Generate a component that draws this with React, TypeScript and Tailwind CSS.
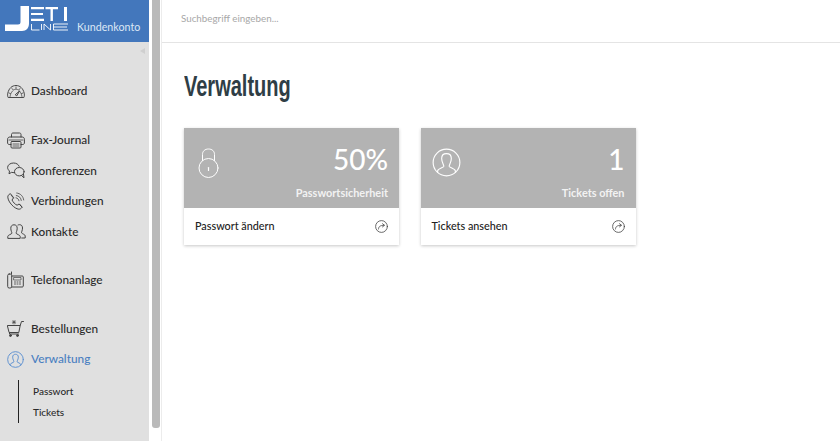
import React from "react";

const ico = { fill: "none", stroke: "currentColor", strokeWidth: 1, strokeLinecap: "round" as const, strokeLinejoin: "round" as const };

function Gauge() {
  return (
    <svg width="18" height="14" viewBox="0 0 18 14" {...ico}>
      <path d="M1 13.200c-.6-1.200-.5-2.800-.2-4C2 4.200 5 1.500 9 1.500s7 2.700 8.200 7.700c.3 1.200.4 2.800-.2 4z" />
      <path d="M3 13.200c0-3 2.500-8 6-8s6 5 6 8" strokeWidth=".7" />
      <path d="M8.500 10.500l4-3.500-2.500 4.500z" />
      <path d="M2 9l1.500.6M5 4.500l1 1.200M9 3v1.500M13 4.500l-1 1.200M16 9l-1.500.6" strokeWidth=".8" />
    </svg>
  );
}
function Printer() {
  return (
    <svg width="18" height="17" viewBox="0 0 18 17" {...ico}>
      <path d="M4.500 5V2.500C4.500 1.500 5.200 1 6 1h6.500c1 0 1.500.7 1.500 1.500V5" />
      <path d="M4 12.500H2.200C1.300 12.500.6 11.800.6 11V7.200C.6 6 1.500 5 2.800 5h12.400c1.300 0 2.200 1 2.200 2.200V11c0 .8-.7 1.500-1.600 1.500H14" />
      <rect x="4" y="9.500" width="10" height="6.500" rx="1" />
      <path d="M6 12h6M6 14h6M2 8h14" strokeWidth=".8" />
    </svg>
  );
}
function Chat() {
  return (
    <svg width="18" height="17" viewBox="0 0 18 17" {...ico}>
      <path d="M7.500 10.600c-1 .1-2 0-2.800-.3L2 11.800l.5-2.800C1.300 8 .6 6.700.6 5.600.6 3 3.200 1 6.500 1c2.700 0 5 1.300 5.700 3.300" />
      <ellipse cx="12.300" cy="9.700" rx="4.800" ry="4.200" />
      <path d="M14.500 13.500l2.500 2.300-.5-3.500" />
    </svg>
  );
}
function PhoneWaves() {
  return (
    <svg width="18" height="18" viewBox="0 0 18 18" {...ico}>
      <path d="M3 1.800c-1.300.7-2.300 1.900-2.200 3.400.4 5 6.500 11.500 11 12 1.300.1 2.600-.8 3.300-2l-3-3.200-2 1.200C8 12.500 6 10 5 8l1.400-2z" />
      <path d="M4.200 3.200l2.200 2.800M12.800 12.200l2.300 2.800" strokeWidth=".7" />
      <path d="M9 5.800c1.500.2 2.800 1.500 3 3M9.300 3.500c2.700.3 4.700 2.300 5 5M9.700 1c3.800.4 6.500 3.200 7 7" strokeWidth=".8" />
    </svg>
  );
}
function Persons() {
  return (
    <svg width="19" height="15" viewBox="0 0 19 15" {...ico}>
      <path d="M.8 14v-1.600c0-1.300 3.500-2.200 4-3C5.200 8.700 3.800 7 3.800 4.200 3.800 2.100 5 .8 7 .8s3.200 1.300 3.200 3.400c0 2.800-1.400 4.500-1 5.200.5.800 4 1.700 4 3V14z" />
      <path d="M11 1c.5-.2 1-.3 1.500-.3 2 0 3 1.300 3 3.300 0 2.500-1.300 4.300-.9 5 .4.700 3.600 1.500 3.600 2.800V14h-3.500" />
    </svg>
  );
}
function PhoneBox() {
  return (
    <svg width="17" height="18" viewBox="0 0 17 18" {...ico}>
      <path d="M4.500 1v2" />
      <rect x=".7" y="3" width="4" height="14" rx="1.500" />
      <path d="M4.700 5h10.600c.6 0 1 .4 1 1v9c0 .6-.4 1-1 1H4.700" />
      <rect x="7" y="6.500" width="7" height="2.500" strokeWidth=".7" />
      <path d="M7.500 11h1M10 11h1M12.500 11h1M7.500 13h1M10 13h1M12.500 13h1" strokeWidth=".9" />
    </svg>
  );
}
function Cart() {
  return (
    <svg width="17" height="17" viewBox="0 0 17 17" {...ico}>
      <path d="M.7 5.500h12.500l-1.400 7H2.500z" />
      <path d="M13.200 5.500L14.500 1.500H16.500" />
      <path d="M2.500 12.500v1.500h9" />
      <circle cx="3.500" cy="15.500" r="1" fill="currentColor" />
      <circle cx="10.500" cy="15.500" r="1" fill="currentColor" />
      <path d="M7 .5v3.500M5.300 2.200H8.700M5.700 1l2.600 2.400M8.300 1L5.700 3.400" strokeWidth=".7" />
    </svg>
  );
}
function UserCircle({ size, sw = 1 }: { size: number; sw?: number }) {
  return (
    <svg width={size} height={size} viewBox="0 0 18 18" {...ico} strokeWidth={sw}>
      <circle cx="9" cy="9" r="8.300" />
      <path d="M3.500 15v-.8c0-1.200 3.300-1.900 3.800-2.700.4-.7-1.300-2.300-1.300-5 0-2 1.200-3 3-3s3 1 3 3c0 2.700-1.700 4.300-1.300 5 .5.800 3.800 1.500 3.800 2.700v.8" />
    </svg>
  );
}
function Lock() {
  return (
    <svg width="21" height="30" viewBox="0 0 21 30" {...ico} strokeWidth={1}>
      <path d="M4.500 12.500V6.500C4.500 3 7 1 10.500 1s6 2 6 5.500v6" />
      <circle cx="10.500" cy="20" r="9.500" />
      <path d="M10.500 19.500v3" strokeWidth="1.200" />
    </svg>
  );
}
function Share() {
  return (
    <svg width="13" height="13" viewBox="0 0 13 13" {...ico} strokeWidth={0.8}>
      <circle cx="6.500" cy="6.500" r="5.900" />
      <path d="M3.500 9c0-2.300 1.500-3.700 5.500-3.700M7.500 3.700L9.500 5.300 7.500 6.900" />
    </svg>
  );
}
function Logo() {
  return (
    <svg width="63" height="25" viewBox="0 0 63 25" fill="white" className="shrink-0">
      <path d="M15.500 0H24v17.500c0 4.500-2.500 7.500-7 7.500H0v-6.500h13c1.700 0 2.500-.8 2.500-2.500z" />
      <path d="M26 1h13v2.200H26zM26 7h12v2H26zM26 12.800h13V15H26z" />
      <path d="M40.500 1H53v2.200H40.500zM45.500 3h2.400v12h-2.400z" />
      <path d="M57 1h3v14h-3z" transform="translate(2 0)" />
      <g fill="none" stroke="white" strokeWidth=".9">
        <path d="M26.500 18v6h8M36.500 18v6M39 24v-6l6.500 6v-6M63 18H48.500v6H63M48.500 21H62" />
      </g>
    </svg>
  );
}

function NavRow({ icon, label, active }: { icon: React.ReactNode; label: string; active?: boolean }) {
  return (
    <div className={`flex h-[30.500px] items-center pl-[7px] ${active ? "text-[#4a7fc1]" : "text-[#2b2b2b]"}`}>
      <span className={`flex w-[24px] shrink-0 items-center justify-start ${active ? "text-[#5b8fd0]" : "text-[#444]"}`}>{icon}</span>
      <span className="text-[11.800px] font-medium leading-none">{label}</span>
    </div>
  );
}

function Card({ icon, value, caption, action, iconClass }: { icon: React.ReactNode; value: string; caption: string; action: string; iconClass: string }) {
  return (
    <div className="w-[215px] bg-white shadow-[0_1px_3px_rgba(0,0,0,0.22)]">
      <div className="flex h-[80px] items-start justify-between bg-[#b3b3b3] pr-[11px] text-white">
        <div className={iconClass}>{icon}</div>
        <div className="flex flex-col items-end">
          <div className="mt-[13px] text-[28px] font-medium leading-[36px]">{value}</div>
          <div className="mt-[8px] text-[10.900px] font-bold leading-[15px] text-[#f2f2f2]">{caption}</div>
        </div>
      </div>
      <div className="flex h-[37px] items-center justify-between pl-[11px] pr-[11px] text-[10.800px] font-medium text-[#222]">
        <span>{action}</span>
        <span className="text-[#444]"><Share /></span>
      </div>
    </div>
  );
}

export default function App() {
  return (
    <div className="flex h-[441px] w-[840px] overflow-hidden bg-white font-['Lato',sans-serif]">
      <aside className="flex h-full w-[149px] shrink-0 flex-col bg-[#e0e0e0]">
        <div className="flex h-[42px] shrink-0 items-start gap-[9px] bg-[#4377bc] pl-[5px] pt-[6px]">
          <Logo />
          <span className="mt-[14px] text-[10.700px] leading-[14px] text-[#dce7f5]">Kundenkonto</span>
        </div>
        <div className="flex h-[18px] justify-end pr-[4px] pt-[6px]">
          <span className="h-0 w-0 border-y-[3px] border-r-[5px] border-y-transparent border-r-[#cfcfcf]" />
        </div>
        <nav className="mt-[16px] flex flex-col">
          <NavRow icon={<Gauge />} label="Dashboard" />
          <div className="mt-[18.500px]">
            <NavRow icon={<Printer />} label="Fax-Journal" />
            <NavRow icon={<Chat />} label="Konferenzen" />
            <NavRow icon={<PhoneWaves />} label="Verbindungen" />
            <NavRow icon={<Persons />} label="Kontakte" />
          </div>
          <div className="mt-[18px]">
            <NavRow icon={<PhoneBox />} label="Telefonanlage" />
          </div>
          <div className="mt-[18px]">
            <NavRow icon={<Cart />} label="Bestellungen" />
            <NavRow icon={<UserCircle size={17} />} label="Verwaltung" active />
          </div>
          <div className="ml-[18px] mt-[5.500px] flex h-[43px] flex-col justify-center gap-px border-l border-[#222] pl-[14px] text-[10px] font-medium leading-[20px] text-[#2b2b2b]">
            <span>Passwort</span>
            <span>Tickets</span>
          </div>
        </nav>
      </aside>

      <div className="ml-[3px] h-[428px] w-[8px] shrink-0 rounded-b-[3px] bg-[#bababa]" />
      <div className="ml-[1px] h-full w-px shrink-0 bg-[#ececec]" />

      <main className="flex min-w-0 flex-1 flex-col">
        <header className="flex h-[43px] shrink-0 items-center border-b border-[#e4e4e4] pb-[5px] pl-[19px] text-[9.800px] text-[#a8a8a8]">
          Suchbegriff eingeben...
        </header>
        <section className="pl-[22px]">
          <h1 className="mt-[28px] origin-left scale-x-[0.69] font-['Liberation_Sans',sans-serif] text-[29px] font-bold leading-[30px] text-[#2f3e46]">
            Verwaltung
          </h1>
          <div className="mt-[27px] flex gap-[21.500px]">
            <Card icon={<Lock />} iconClass="ml-[14px] mt-[20px]" value="50%" caption="Passwortsicherheit" action="Passwort ändern" />
            <Card icon={<UserCircle size={29} sw={0.7} />} iconClass="ml-[11px] mt-[20px]" value="1" caption="Tickets offen" action="Tickets ansehen" />
          </div>
        </section>
      </main>
    </div>
  );
}
